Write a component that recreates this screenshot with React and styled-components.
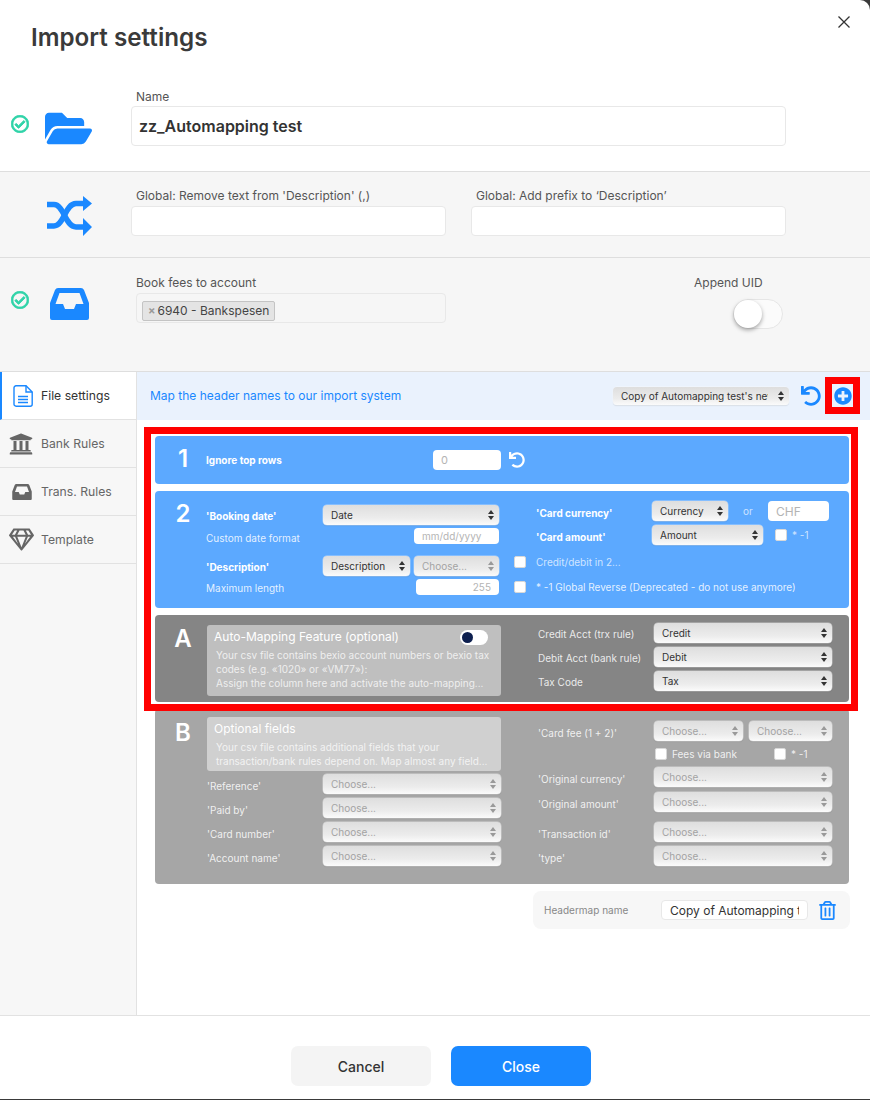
import React from 'react';
import styled, { createGlobalStyle } from 'styled-components';
import { FaFolderOpen, FaRegCheckCircle, FaUniversity, FaRegGem, FaUndo, FaPlusCircle, FaRegTrashAlt } from 'react-icons/fa';

const Global = createGlobalStyle`
    html, body { margin: 0; padding: 0; background: #3a3a3a; }
    body, input, select, button { font-family: Inter, "Liberation Sans", sans-serif; }
    * { box-sizing: border-box; }
`;

const Modal = styled.div`
    position: relative;
    width: 870px;
    height: 1099px;
    background: #fff;
    border-top-right-radius: 10px;
    overflow: hidden;
    display: flex;
    flex-direction: column;
`;

const CloseBtn = styled.button`
    position: absolute;
    top: 14px;
    right: 18px;
    width: 16px;
    height: 16px;
    padding: 0;
    border: 0;
    background: none;
    color: #333;
`;

const Title = styled.h1`
    margin: 0;
    height: 76px;
    padding: 23px 0 0 31px;
    font-size: 24.2px;
    line-height: 30px;
    font-weight: 600;
    color: #3a3a3a;
`;

const Section = styled.section`
    display: flex;
    height: ${(p) => p.$h}px;
    padding-top: ${(p) => p.$pt}px;
    background: ${(p) => (p.$gray ? '#f6f6f6' : '#fff')};
    border-bottom: 1px solid #dedede;
`;

const StatusSlot = styled.div`
    width: 29px;
    padding-left: 11px;
    margin-top: ${(p) => p.$mt}px;
    color: #2fd3a8;
    font-size: 18px;
    line-height: 0;
    svg {
        stroke: currentColor;
        stroke-width: 24px;
    }
`;

const IconSlot = styled.div`
    width: 80px;
    margin-right: 22px;
    margin-top: ${(p) => p.$mt}px;
    padding-right: ${(p) => p.$pr || 0}px;
    display: flex;
    justify-content: center;
    color: #1a88ff;
    line-height: 0;
`;

const Field = styled.div`
    display: flex;
    flex-direction: column;
    margin-left: ${(p) => p.$ml || 0}px;
`;

const FieldLabel = styled.label`
    height: 18px;
    padding-left: 5px;
    font-size: 12px;
    line-height: 18px;
    color: #555;
`;

const TextInput = styled.input`
    width: ${(p) => p.$w}px;
    height: ${(p) => p.$h}px;
    margin-top: ${(p) => p.$mt || 0}px;
    padding: 0 ${(p) => p.$px || 8}px;
    border: 1px solid #e8e8e8;
    border-radius: 4px;
    background: #fff;
    color: #333;
    font-size: ${(p) => p.$size || 12}px;
    font-weight: ${(p) => p.$weight || 400};
    outline: none;
`;

const TagBox = styled.div`
    width: 310px;
    height: 30px;
    margin: 1px 0 0 5px;
    padding: 4px 5px;
    border: 1px solid #e8e8e8;
    border-radius: 4px;
`;

const Tag = styled.span`
    display: inline-flex;
    align-items: center;
    height: 20px;
    padding: 0 5px 1px;
    background: #e4e4e4;
    border: 1px solid #c4c4c4;
    border-radius: 2px;
    font-size: 12px;
    color: #444;
    b {
        margin-right: 2px;
        font-weight: 700;
        font-size: 11px;
        color: #999;
    }
`;

const Toggle = styled.div`
    position: relative;
    width: 50px;
    height: 30px;
    margin: 7px 0 0 44px;
    border: 1px solid #e6e6e6;
    border-radius: 15px;
    background: #fbfbfb;
    &::after {
        content: '';
        position: absolute;
        top: 0;
        left: 0;
        width: 28px;
        height: 28px;
        border-radius: 50%;
        background: #fff;
        box-shadow: 0 2px 4px rgba(0, 0, 0, 0.35);
    }
`;

const Tabs = styled.div`
    flex: 1;
    display: flex;
    min-height: 0;
    border-bottom: 1px solid #e2e2e2;
`;

const Sidebar = styled.nav`
    width: 137px;
    background: #f7f7f7;
    border-right: 1px solid #e2e2e2;
`;

const TabItem = styled.div`
    display: flex;
    align-items: center;
    height: 48px;
    padding-left: ${(p) => (p.$active ? 11 : 9)}px;
    background: ${(p) => (p.$active ? '#fff' : 'transparent')};
    border-left: ${(p) => (p.$active ? '2px solid #1a88ff' : '0')};
    border-bottom: 1px solid #e2e2e2;
    color: ${(p) => (p.$active ? '#333' : '#666')};
    font-size: 12.2px;
    span {
        margin-left: auto;
        width: 95px;
    }
    svg {
        margin-left: ${(p) => p.$iconMl || 0}px;
        color: ${(p) => (p.$active ? '#1a88ff' : '#666')};
    }
`;

const Main = styled.main`
    position: relative;
    flex: 1;
    display: flex;
    flex-direction: column;
`;

const Bar = styled.div`
    position: relative;
    display: flex;
    align-items: center;
    height: 48px;
    padding-left: 13px;
    background: #eaf2fd;
`;

const BarText = styled.div`
    flex: 1;
    padding-bottom: 1px;
    color: #1a88ff;
    font-size: 12px;
`;

const BarIcon = styled.span`
    color: ${(p) => p.$color || '#1a88ff'};
    line-height: 0;
    margin-left: ${(p) => p.$ml}px;
    margin-right: ${(p) => p.$mr || 0}px;
`;

const Marker = styled.div`
    position: absolute;
    top: ${(p) => p.$top}px;
    left: ${(p) => p.$left}px;
    width: ${(p) => p.$w}px;
    height: ${(p) => p.$h}px;
    border: 7px solid #ff0000;
    pointer-events: none;
`;

const Content = styled.div`
    display: flex;
    flex-direction: column;
    gap: 7px;
    padding: 16px 21px 0 18px;
`;

const Card = styled.div`
    display: flex;
    height: ${(p) => p.$h}px;
    background: ${(p) => p.$bg};
    border-radius: 4px;
`;

const Mark = styled.div`
    width: 51px;
    padding: ${(p) => p.$pt}px 0 0 5px;
    text-align: center;
    font-size: 24px;
    line-height: 30px;
    font-weight: 600;
    color: #fff;
`;

const Left = styled.div`
    display: flex;
    flex-direction: column;
    width: ${(p) => p.$w || 293}px;
    margin-right: ${(p) => p.$mr || 15}px;
    padding-top: ${(p) => p.$pt}px;
`;

const Right = styled.div`
    display: flex;
    flex-direction: column;
    padding-top: ${(p) => p.$pt}px;
`;

const Row = styled.div`
    display: flex;
    align-items: center;
    justify-content: ${(p) => (p.$between ? 'space-between' : 'flex-start')};
    width: ${(p) => (p.$w ? `${p.$w}px` : 'auto')};
    height: ${(p) => p.$h || 20}px;
    margin-top: ${(p) => p.$mt || 0}px;
`;

const Slot = styled.div`
    display: flex;
    align-items: center;
    flex: none;
    gap: ${(p) => p.$gap || 0}px;
    width: ${(p) => p.$w}px;
`;

const Label = styled.span`
    flex: none;
    width: ${(p) => (p.$w ? `${p.$w}px` : 'auto')};
    padding-top: ${(p) => p.$pt || 0}px;
    padding-left: ${(p) => p.$pl || 0}px;
    font-size: 10px;
    line-height: 14px;
    font-weight: ${(p) => (p.$bold ? 700 : 400)};
    color: ${(p) => (p.$dim ? 'rgba(255,255,255,0.72)' : p.$soft ? 'rgba(255,255,255,0.85)' : '#fff')};
    white-space: nowrap;
`;

const SelectWrap = styled.div`
    position: relative;
    flex: none;
    width: ${(p) => p.$w}px;
    height: ${(p) => p.$h || 20}px;
    margin-left: ${(p) => p.$ml || 0}px;
    &::before, &::after {
        content: '';
        position: absolute;
        right: 5px;
        border-left: 3px solid transparent;
        border-right: 3px solid transparent;
        pointer-events: none;
    }
    &::before {
        top: 50%;
        margin-top: -5px;
        border-bottom: 4px solid ${(p) => (p.$muted ? '#999' : '#333')};
    }
    &::after {
        top: 50%;
        margin-top: 1px;
        border-top: 4px solid ${(p) => (p.$muted ? '#999' : '#333')};
    }
`;

const NativeSelect = styled.select`
    appearance: none;
    display: block;
    width: 100%;
    height: 100%;
    padding: 0 21px 0 8px;
    border: 0;
    border-radius: 4px;
    background: linear-gradient(#dedede, #ececec 65%, #fbfbfb);
    box-shadow: 0 0 0 0.5px rgba(255, 255, 255, 0.5), 0 1px 1px rgba(0, 0, 0, 0.12);
    font-size: 10px;
    color: ${(p) => (p.$muted ? '#a3a3a3' : '#333')};
    outline: none;
`;

const Check = styled.input.attrs({ type: 'checkbox' })`
    appearance: none;
    flex: none;
    width: 12px;
    height: 12px;
    margin: 0 0 0 ${(p) => p.$ml || 0}px;
    background: #fff;
    border: 1px solid #d8d8d8;
    border-radius: 2px;
`;

const SmallInput = styled.input`
    flex: none;
    width: ${(p) => p.$w}px;
    height: ${(p) => p.$h}px;
    margin-left: ${(p) => p.$ml || 0}px;
    padding: 0 8px;
    border: 0;
    border-radius: 4px;
    background: #fff;
    font-size: ${(p) => p.$size || 10}px;
    text-align: ${(p) => p.$align || 'left'};
    outline: none;
    &::placeholder {
        color: #b4b4b4;
        opacity: 1;
    }
`;

const Or = styled.span`
    width: 40px;
    text-align: center;
    font-size: 10px;
    color: rgba(255, 255, 255, 0.7);
`;

const Info = styled.div`
    position: relative;
    width: 294px;
    height: ${(p) => p.$h}px;
    margin-left: 1px;
    padding: 3px 7px;
    background: ${(p) => p.$bg};
    border-radius: 3px;
    color: rgba(255, 255, 255, 0.75);
    h4 {
        margin: 0;
        font-size: 12px;
        line-height: 18px;
        font-weight: 400;
        color: #fff;
    }
    p {
        margin: 2px 0 0 2px;
        font-size: 10px;
        line-height: 14px;
        white-space: nowrap;
    }
`;

const MiniToggle = styled.div`
    position: absolute;
    top: 5px;
    right: 13px;
    width: 28px;
    height: 15px;
    border-radius: 8px;
    background: #fff;
    &::after {
        content: '';
        position: absolute;
        top: 2px;
        left: 2px;
        width: 11px;
        height: 11px;
        border-radius: 50%;
        background: #0d1f4f;
    }
`;

const Headermap = styled.div`
    display: flex;
    align-items: center;
    align-self: flex-end;
    width: 317px;
    height: 38px;
    padding-left: 11px;
    margin-right: -1px;
    background: #f7f7f7;
    border-radius: 8px;
`;

const HeadermapLabel = styled.span`
    width: 117px;
    color: #888;
    font-size: 10px;
`;

const Footer = styled.footer`
    display: flex;
    justify-content: center;
    gap: 20px;
    height: 83px;
    padding: 30px 0 0 12px;
`;

const Button = styled.button`
    width: 140px;
    height: 40px;
    border: 0;
    border-radius: 7px;
    background: ${(p) => (p.$primary ? '#1a88ff' : '#f4f4f4')};
    color: ${(p) => (p.$primary ? '#fff' : '#333')};
    font-size: 14px;
    font-weight: 500;
`;

const Pick = ({ w, ml, value = 'Choose...', muted, h }) => {
    return (
        <SelectWrap $w={w} $ml={ml} $h={h} $muted={muted}>
            <NativeSelect $muted={muted} defaultValue={value}>
                <option>{value}</option>
            </NativeSelect>
        </SelectWrap>
    );
};

const InboxIcon = ({ width, height }) => (
    <svg width={width} height={height} viewBox='0 0 39 32' fill='currentColor' fillRule='evenodd'>
        <path d='M8 0H31Q33 0 34 2L39 15V30Q39 32 37 32H2Q0 32 0 30V15L5 2Q6 0 8 0ZM9.5 5L5.5 16H13L15 21H24L26 16H33.5L29.5 5Z' />
    </svg>
);

const ShuffleIcon = () => (
    <svg width='45' height='40' viewBox='0 0 45 40' fill='none' stroke='currentColor' strokeWidth='5.5'>
        <path d='M0 8.5H7C17 8.5 18 31 29 31H38' />
        <path d='M0 30H7C17 30 18 7.5 29 7.5H38' />
        <path d='M36 0L45 7.5L36 15ZM36 22L45 31L36 40Z' fill='currentColor' stroke='none' />
    </svg>
);

const FileIcon = () => (
    <svg width='20' height='22' viewBox='0 0 20 22' fill='none' stroke='currentColor' strokeWidth='1.4'>
        <path d='M3 .8H13L19.2 7V19.2A2 2 0 0 1 17.2 21.2H3A2 2 0 0 1 1 19.2V2.8A2 2 0 0 1 3 .8Z' />
        <path d='M13 .8V7H19.2M5 11.5H15M5 14.5H15M5 17.5H15' />
    </svg>
);

const leftFields = ["'Reference'", "'Paid by'", "'Card number'", "'Account name'"];

const rightFields = [
    { name: "'Original currency'", mt: 7 },
    { name: "'Original amount'", mt: 5 },
    { name: "'Transaction id'", mt: 10 },
    { name: "'type'", mt: 4 },
];

function App() {
    return (
        <Modal>
            <Global />
            <CloseBtn aria-label='close'>
                <svg width='16' height='16' viewBox='0 0 16 16' fill='none' stroke='currentColor' strokeWidth='1.3'>
                    <path d='M2.5 2.5l11 11M13.5 2.5l-11 11' />
                </svg>
            </CloseBtn>
            <Title>Import settings</Title>

            <Section $h={96} $pt={12}>
                <StatusSlot $mt={27}><FaRegCheckCircle /></StatusSlot>
                <IconSlot $mt={17} $pr={2}><FaFolderOpen size={47} /></IconSlot>
                <Field>
                    <FieldLabel>Name</FieldLabel>
                    <TextInput $w={655} $h={40} $size={16} $weight={600} $px={7} defaultValue='zz_Automapping test' />
                </Field>
            </Section>

            <Section $h={86} $pt={15} $gray>
                <StatusSlot />
                <IconSlot $mt={9}><ShuffleIcon /></IconSlot>
                <Field>
                    <FieldLabel>Global: Remove text from 'Description' (,)</FieldLabel>
                    <TextInput $w={315} $h={30} $mt={1} />
                </Field>
                <Field $ml={25}>
                    <FieldLabel>Global: Add prefix to ‘Description’</FieldLabel>
                    <TextInput $w={315} $h={30} $mt={1} />
                </Field>
            </Section>

            <Section $h={114} $pt={16} $gray>
                <StatusSlot $mt={17}><FaRegCheckCircle /></StatusSlot>
                <IconSlot $mt={14}><InboxIcon width={39} height={32} /></IconSlot>
                <Field>
                    <FieldLabel>Book fees to account</FieldLabel>
                    <TagBox><Tag><b>×</b>6940 - Bankspesen</Tag></TagBox>
                </Field>
                <Field $ml={243}>
                    <FieldLabel>Append UID</FieldLabel>
                    <Toggle />
                </Field>
            </Section>

            <Tabs>
                <Sidebar>
                    <TabItem $active><FileIcon /><span>File settings</span></TabItem>
                    <TabItem><FaUniversity size={24} /><span>Bank Rules</span></TabItem>
                    <TabItem $iconMl={3}><InboxIcon width={20} height={16} /><span>Trans. Rules</span></TabItem>
                    <TabItem><FaRegGem size={25} /><span>Template</span></TabItem>
                </Sidebar>
                <Main>
                    <Bar>
                        <BarText>Map the header names to our import system</BarText>
                        <Pick w={176} h={18} value="Copy of Automapping test's new headermap" />
                        <BarIcon $ml={12}><FaUndo size={20} /></BarIcon>
                        <BarIcon $ml={13} $mr={18}><FaPlusCircle size={18} /></BarIcon>
                        <Marker $top={5} $left={688} $w={35} $h={37} />
                    </Bar>
                    <Content>
                        <Card $h={48} $bg='#5ca9ff'>
                            <Mark $pt={8}>1</Mark>
                            <Row $h={48} $between $w={295}>
                                <Label $bold>Ignore top rows</Label>
                                <SmallInput $w={68} $h={20} $size={11} placeholder='0' />
                            </Row>
                            <Row $h={48}>
                                <BarIcon $ml={8} $color='#fff'><FaUndo size={16} /></BarIcon>
                            </Row>
                        </Card>

                        <Card $h={117} $bg='#5ca9ff'>
                            <Mark $pt={8}>2</Mark>
                            <Left $pt={14}>
                                <Row $between>
                                    <Label $bold $pt={1}>'Booking date'</Label>
                                    <Pick w={176} value='Date' />
                                </Row>
                                <Row $between $h={16} $mt={3}>
                                    <Label $soft $pt={3}>Custom date format</Label>
                                    <SmallInput $w={85} $h={16} placeholder='mm/dd/yyyy' />
                                </Row>
                                <Row $between $mt={12}>
                                    <Label $bold $pt={1}>'Description'</Label>
                                    <Slot $w={176} $gap={4}>
                                        <Pick w={87} value='Description' />
                                        <Pick w={85} muted />
                                    </Slot>
                                </Row>
                                <Row $between $h={16} $mt={3}>
                                    <Label $soft $pt={1}>Maximum length</Label>
                                    <SmallInput $w={83} $h={16} $align='right' placeholder='255' />
                                </Row>
                            </Left>
                            <Right $pt={10}>
                                <Row>
                                    <Slot $w={22} />
                                    <Label $bold $w={116} $pt={4}>'Card currency'</Label>
                                    <Pick w={76} value='Currency' />
                                    <Or>or</Or>
                                    <SmallInput $w={61} $h={20} $size={12} placeholder='CHF' />
                                </Row>
                                <Row $mt={4}>
                                    <Slot $w={22} />
                                    <Label $bold $w={116} $pt={4}>'Card amount'</Label>
                                    <Pick w={111} value='Amount' />
                                    <Check $ml={12} />
                                    <Label $dim $pl={5}>* -1</Label>
                                </Row>
                                <Row $mt={7}>
                                    <Slot $w={22}><Check /></Slot>
                                    <Label $dim>Credit/debit in 2...</Label>
                                </Row>
                                <Row $mt={5}>
                                    <Slot $w={22}><Check /></Slot>
                                    <Label $soft>* -1 Global Reverse (Deprecated - do not use anymore)</Label>
                                </Row>
                            </Right>
                        </Card>

                        <Card $h={87} $bg='#858585'>
                            <Mark $pt={9}>A</Mark>
                            <Left $pt={10} $w={295} $mr={13}>
                                <Info $h={71} $bg='#bfbfbf'>
                                    <h4>Auto-Mapping Feature (optional)</h4>
                                    <MiniToggle />
                                    <p>
                                        Your csv file contains bexio account numbers or bexio tax<br />
                                        codes (e.g. «1020» or «VM77»):<br />
                                        Assign the column here and activate the auto-mapping...
                                    </p>
                                </Info>
                            </Left>
                            <Right $pt={8}>
                                <Row>
                                    <Slot $w={24} />
                                    <Label $soft $w={116} $pt={1}>Credit Acct (trx rule)</Label>
                                    <Pick w={178} value='Credit' />
                                </Row>
                                <Row $mt={4}>
                                    <Slot $w={24} />
                                    <Label $soft $w={116} $pt={1}>Debit Acct (bank rule)</Label>
                                    <Pick w={178} value='Debit' />
                                </Row>
                                <Row $mt={4}>
                                    <Slot $w={24} />
                                    <Label $soft $w={116} $pt={1}>Tax Code</Label>
                                    <Pick w={178} value='Tax' />
                                </Row>
                            </Right>
                        </Card>

                        <Card $h={175} $bg='#a6a6a6'>
                            <Mark $pt={9}>B</Mark>
                            <Left $pt={8} $w={295} $mr={13}>
                                <Info $h={54} $bg='#d0d0d0'>
                                    <h4>Optional fields</h4>
                                    <p>
                                        Your csv file contains additional fields that your<br />
                                        transaction/bank rules depend on. Map almost any field...
                                    </p>
                                </Info>
                                {leftFields.map((name, i) => (
                                    <Row key={name} $between $mt={i === 0 ? 3 : 4}>
                                        <Label $soft $pt={4} $pl={1}>{name}</Label>
                                        <Pick w={178} muted />
                                    </Row>
                                ))}
                            </Left>
                            <Right $pt={12}>
                                <Row>
                                    <Slot $w={24} />
                                    <Label $soft $w={116} $pt={4}>'Card fee (1 + 2)'</Label>
                                    <Pick w={89} muted />
                                    <Pick w={83} ml={6} muted />
                                </Row>
                                <Row $h={12} $mt={7}>
                                    <Slot $w={140} />
                                    <Check $ml={1} />
                                    <Label $soft $w={107} $pl={5}>Fees via bank</Label>
                                    <Check />
                                    <Label $soft $pl={5}>* -1</Label>
                                </Row>
                                {rightFields.map((f) => (
                                    <Row key={f.name} $mt={f.mt}>
                                        <Slot $w={24} />
                                        <Label $soft $w={116} $pt={3}>{f.name}</Label>
                                        <Pick w={178} muted />
                                    </Row>
                                ))}
                            </Right>
                        </Card>

                        <Headermap>
                            <HeadermapLabel>Headermap name</HeadermapLabel>
                            <TextInput $w={147} $h={20} defaultValue='Copy of Automapping test' />
                            <BarIcon $ml={10}><FaRegTrashAlt size={19} /></BarIcon>
                        </Headermap>
                    </Content>
                    <Marker $top={55} $left={7} $w={714} $h={284} />
                </Main>
            </Tabs>

            <Footer>
                <Button>Cancel</Button>
                <Button $primary>Close</Button>
            </Footer>
        </Modal>
    );
}

export default App;
